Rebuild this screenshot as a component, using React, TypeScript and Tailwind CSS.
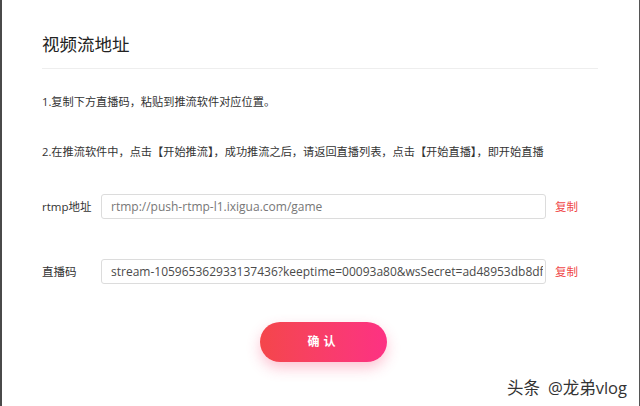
const font = { fontFamily: '"Open Sans", "Noto Sans CJK SC", sans-serif' }

const Row = ({ label, value, dark }: { label: string; value: string; dark?: boolean }) => (
    <div className="flex items-center">
        <div className="w-[59px] text-[11.5px] text-[#333]">{label}</div>
        <div className="flex h-[25px] w-[445px] items-center rounded-[3px] border border-[#dcdcdc] pl-[9px] pr-[2px]">
            <span className={"block min-w-0 flex-1 overflow-hidden whitespace-nowrap text-[12px] " + (dark ? "text-[#4a4a4a]" : "text-[#777]")}>{value}</span>
        </div>
        <div className="ml-[9px] text-[11.5px] text-[#f04848]">复制</div>
    </div>
)

export default function App() {
    return (
        <div className="relative h-[406px] w-[640px] overflow-hidden border-l-[2px] border-r border-l-[#4a4a4a] border-r-[#555] bg-white" style={font}>
            <div className="pl-[40px] pr-[41px] pt-[32px]">
                <h1 className="text-[17.5px] leading-[24px] font-normal text-[#222]">视频流地址</h1>
                <div className="mt-[12px] h-px bg-[#eeeeee]" />
                <p className="mt-[25px] text-[11.2px] leading-[16px] text-[#333]">1.复制下方直播码，粘贴到推流软件对应位置。</p>
                <p className="mt-[34px] text-[11.2px] leading-[16px] text-[#333]">2.在推流软件中，点击【开始推流】，成功推流之后，请返回直播列表，点击【开始直播】，即开始直播</p>
                <div className="mt-[34px]">
                    <Row label="rtmp地址" value="rtmp://push-rtmp-l1.ixigua.com/game" />
                </div>
                <div className="mt-[40px]">
                    <Row label="直播码" value="stream-105965362933137436?keeptime=00093a80&wsSecret=ad48953db8df78" dark />
                </div>
                <div className="mt-[38px] flex justify-center pl-[7px]">
                    <button className="h-[40px] w-[127px] rounded-full bg-gradient-to-r from-[#f4464a] to-[#fd3183] text-[12px] font-bold tracking-[4px] text-white shadow-[0_6px_14px_rgba(250,60,110,0.3)]">
                        确认
                    </button>
                </div>
            </div>
            <div className="absolute bottom-[8px] right-[12px] flex text-[16.5px] leading-[20px] text-[#333] [text-shadow:0_0_2px_#fff,0_0_2px_#fff]">
                <span>头条</span>
                <span className="ml-[8px]">@龙弟vlog</span>
            </div>
        </div>
    )
}
